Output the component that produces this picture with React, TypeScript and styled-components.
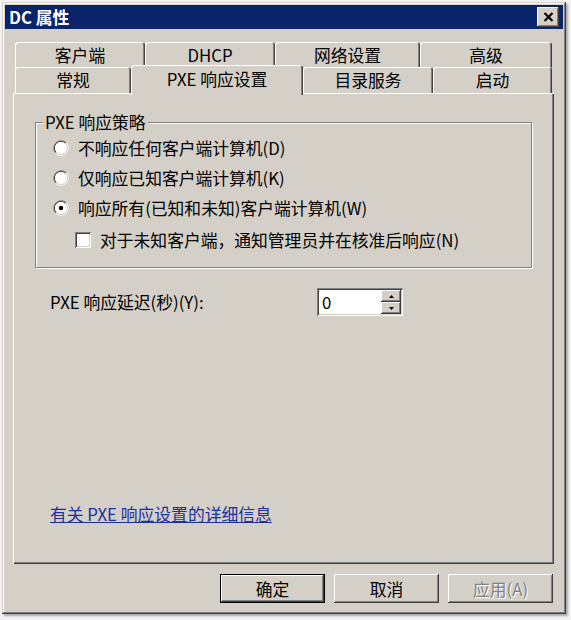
import React from 'react';
import styled, { createGlobalStyle, css } from 'styled-components';

const face = '#d4d0c8';
const shadow = '#808080';
const dark = '#404040';

const GlobalStyle = createGlobalStyle`
  html, body {
    margin: 0;
    padding: 0;
  }
  body {
    width: 571px;
    height: 620px;
    overflow: hidden;
    background: #f2f2f2;
    font-family: "Noto Sans CJK SC", "Noto Sans", sans-serif;
    font-size: 16.8px;
    color: #000;
  }
`;

const raised = css`
  box-shadow: inset -1px -1px ${dark}, inset 1px 1px #fff,
    inset -2px -2px ${shadow}, inset 2px 2px ${face};
`;

const sunken = css`
  box-shadow: inset 1px 1px ${shadow}, inset -1px -1px #fff,
    inset 2px 2px ${dark}, inset -2px -2px ${face};
`;

const Window = styled.div`
  box-sizing: border-box;
  margin: 2px 0 0 2px;
  width: 564px;
  height: 612px;
  padding: 3px;
  background: ${face};
  display: flex;
  flex-direction: column;
  box-shadow: inset -1px -1px ${dark}, inset 1px 1px ${face},
    inset -2px -2px ${shadow}, inset 2px 2px #fff, 2px 2px 2px rgba(0, 0, 0, 0.3);
`;

const TitleBar = styled.div`
  height: 24px;
  background: #0a246a;
  display: flex;
  align-items: center;
  justify-content: space-between;
  padding: 0 4px 0 4px;
`;

const Title = styled.span`
  color: #fff;
  font-weight: bold;
  font-size: 16.8px;
  line-height: 24px;
`;

const CloseButton = styled.button`
  box-sizing: border-box;
  width: 22px;
  height: 20px;
  padding: 0;
  border: none;
  background: ${face};
  display: flex;
  align-items: center;
  justify-content: center;
  ${raised}
`;

const Body = styled.div`
  flex: 1;
  display: flex;
  flex-direction: column;
  padding: 13px 9px 8px 8px;
`;

const TabRow = styled.div<{ $h: number }>`
  display: flex;
  align-items: flex-end;
  height: ${p => p.$h}px;
  margin: 0 2px;
`;

const Tab = styled.div<{ $w: number; $active?: boolean }>`
  box-sizing: border-box;
  width: ${p => p.$w}px;
  height: ${p => (p.$active ? 30 : 26)}px;
  background: ${face};
  border-radius: 3px 3px 0 0;
  display: flex;
  align-items: center;
  justify-content: center;
  padding-bottom: ${p => (p.$active ? 2 : 0)}px;
  line-height: 22px;
  box-shadow: inset 1px 1px #fff, inset -1px 0 ${dark}, inset -2px 0 ${shadow};
  ${p =>
    p.$active &&
    css`
      position: relative;
      z-index: 1;
      margin-bottom: -2px;
    `}
`;

const Panel = styled.div`
  flex: 1;
  display: flex;
  flex-direction: column;
  padding: 18px 22px 39px 22px;
  box-shadow: inset 1px 1px #fff, inset -1px -1px ${dark}, inset -2px -2px ${shadow};
`;

const GroupBox = styled.fieldset`
  margin: 0;
  padding: 0;
  border: 1px solid ${shadow};
  box-shadow: inset 1px 1px #fff, 1px 1px #fff;
`;

const Legend = styled.legend`
  margin-left: 7px;
  padding: 0 2px;
  line-height: 22px;
  background: ${face};
`;

const GroupContent = styled.div`
  padding: 0 0 11px 17px;
`;

const OptionRow = styled.label<{ $indent?: number; $h?: number }>`
  display: flex;
  align-items: center;
  gap: 9px;
  height: ${p => p.$h ?? 30}px;
  padding-left: ${p => p.$indent ?? 0}px;
  line-height: 22px;
`;

const CheckBox = styled.span`
  box-sizing: border-box;
  width: 16px;
  height: 16px;
  background: #fff;
  ${sunken}
`;

const FieldRow = styled.div`
  display: flex;
  align-items: center;
  margin-top: 20px;
  padding-left: 15px;
  height: 28px;
`;

const FieldLabel = styled.span`
  width: 267px;
  line-height: 22px;
`;

const Spinner = styled.div`
  box-sizing: border-box;
  width: 86px;
  height: 28px;
  background: #fff;
  display: flex;
  padding: 2px;
  ${sunken}
`;

const SpinValue = styled.span`
  flex: 1;
  padding-left: 3px;
  line-height: 24px;
`;

const SpinButtons = styled.div`
  display: flex;
  flex-direction: column;
  width: 20px;
`;

const SpinButton = styled.div`
  flex: 1;
  background: ${face};
  display: flex;
  align-items: center;
  justify-content: center;
  ${raised}
`;

const HelpLink = styled.a`
  margin-top: auto;
  margin-left: 15px;
  color: #1c2fa0;
  text-decoration: underline;
  line-height: 22px;
  cursor: pointer;
`;

const ButtonRow = styled.div`
  display: flex;
  justify-content: flex-end;
  gap: 9px;
  margin-top: 10px;
  padding-right: 1px;
`;

const Button = styled.button<{ $default?: boolean }>`
  box-sizing: border-box;
  width: 105px;
  height: 29px;
  padding: 0;
  border: none;
  background: ${face};
  font: inherit;
  color: #000;
  ${raised}
  ${p =>
    p.$default &&
    css`
      box-shadow: inset 0 0 0 1px #000, inset -2px -2px ${dark}, inset 2px 2px #fff,
        inset -3px -3px ${shadow};
    `}
  &:disabled {
    color: ${shadow};
    text-shadow: 1px 1px #fff;
  }
`;

const Radio = ({ checked }: { checked?: boolean }) => (
  <svg width="16" height="16" viewBox="0 0 16 16">
    <path d="M2.7 13.3 A7.5 7.5 0 0 1 13.3 2.7" stroke={shadow} fill="none" />
    <path d="M13.3 2.7 A7.5 7.5 0 0 1 2.7 13.3" stroke="#fff" fill="none" />
    <path d="M3.4 12.6 A6.5 6.5 0 0 1 12.6 3.4" stroke={dark} fill="none" />
    <path d="M12.6 3.4 A6.5 6.5 0 0 1 3.4 12.6" stroke={face} fill="none" />
    <circle cx="8" cy="8" r="6" fill="#fff" />
    {checked && <circle cx="8" cy="8" r="2.2" fill="#000" />}
  </svg>
);

const Arrow = ({ up }: { up?: boolean }) => (
  <svg width="5" height="3" viewBox="0 0 5 3">
    <path d={up ? 'M2.5 0 L5 3 L0 3 Z' : 'M0 0 L5 0 L2.5 3 Z'} fill="#000" />
  </svg>
);

const backTabs = [
  { label: '客户端', w: 130 },
  { label: 'DHCP', w: 130 },
  { label: '网络设置', w: 145 },
  { label: '高级', w: 132 }
];

const frontTabs = [
  { label: '常规', w: 116 },
  { label: 'PXE 响应设置', w: 172, active: true },
  { label: '目录服务', w: 130 },
  { label: '启动', w: 119 }
];

export default function App() {
  return (
    <>
      <GlobalStyle />
      <Window>
        <TitleBar>
          <Title>DC 属性</Title>
          <CloseButton aria-label="关闭">
            <svg width="11" height="10" viewBox="0 0 11 10">
              <path d="M1.5 1 L9.5 9 M9.5 1 L1.5 9" stroke="#000" strokeWidth="2.2" />
            </svg>
          </CloseButton>
        </TitleBar>
        <Body>
          <TabRow $h={26}>
            {backTabs.map(t => (
              <Tab key={t.label} $w={t.w}>
                {t.label}
              </Tab>
            ))}
          </TabRow>
          <TabRow $h={25}>
            {frontTabs.map(t => (
              <Tab key={t.label} $w={t.w} $active={t.active}>
                {t.label}
              </Tab>
            ))}
          </TabRow>
          <Panel>
            <GroupBox>
              <Legend>PXE 响应策略</Legend>
              <GroupContent>
                <OptionRow>
                  <Radio />
                  不响应任何客户端计算机(D)
                </OptionRow>
                <OptionRow>
                  <Radio />
                  仅响应已知客户端计算机(K)
                </OptionRow>
                <OptionRow>
                  <Radio checked />
                  响应所有(已知和未知)客户端计算机(W)
                </OptionRow>
                <OptionRow $indent={22} $h={33}>
                  <CheckBox />
                  对于未知客户端，通知管理员并在核准后响应(N)
                </OptionRow>
              </GroupContent>
            </GroupBox>
            <FieldRow>
              <FieldLabel>PXE 响应延迟(秒)(Y):</FieldLabel>
              <Spinner>
                <SpinValue>0</SpinValue>
                <SpinButtons>
                  <SpinButton>
                    <Arrow up />
                  </SpinButton>
                  <SpinButton>
                    <Arrow />
                  </SpinButton>
                </SpinButtons>
              </Spinner>
            </FieldRow>
            <HelpLink>有关 PXE 响应设置的详细信息</HelpLink>
          </Panel>
          <ButtonRow>
            <Button $default>确定</Button>
            <Button>取消</Button>
            <Button disabled>应用(A)</Button>
          </ButtonRow>
        </Body>
      </Window>
    </>
  );
}
